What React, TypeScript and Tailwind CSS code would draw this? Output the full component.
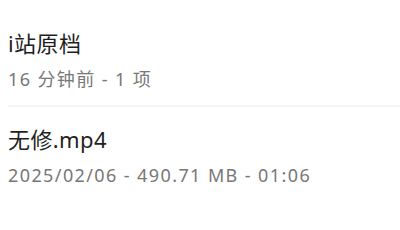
import React from "react";

const items = [
  { title: "i站原档", sub: "16 分钟前 - 1 项" },
  { title: "无修.mp4", sub: "2025/02/06 - 490.71 MB - 01:06" },
];

export default function App() {
  return (
    <div
      className="w-[400px] h-[230px] bg-white pl-2 pt-[28px]"
      style={{ fontFamily: '"Noto Sans", "Noto Sans CJK SC", sans-serif' }}
    >
      {items.map((it, i) => (
        <div key={i}>
          {i > 0 && <div className="h-[2px] bg-[#f4f4f4] mt-[14px] mb-[17px]" />}
          <div className="text-[22px] leading-[30px] tracking-[0.4px] text-[#1f1f1f]">{it.title}</div>
          <div className="mt-[9px] text-[18px] leading-[24px] tracking-[1.4px] text-[#777777]">{it.sub}</div>
        </div>
      ))}
    </div>
  );
}
